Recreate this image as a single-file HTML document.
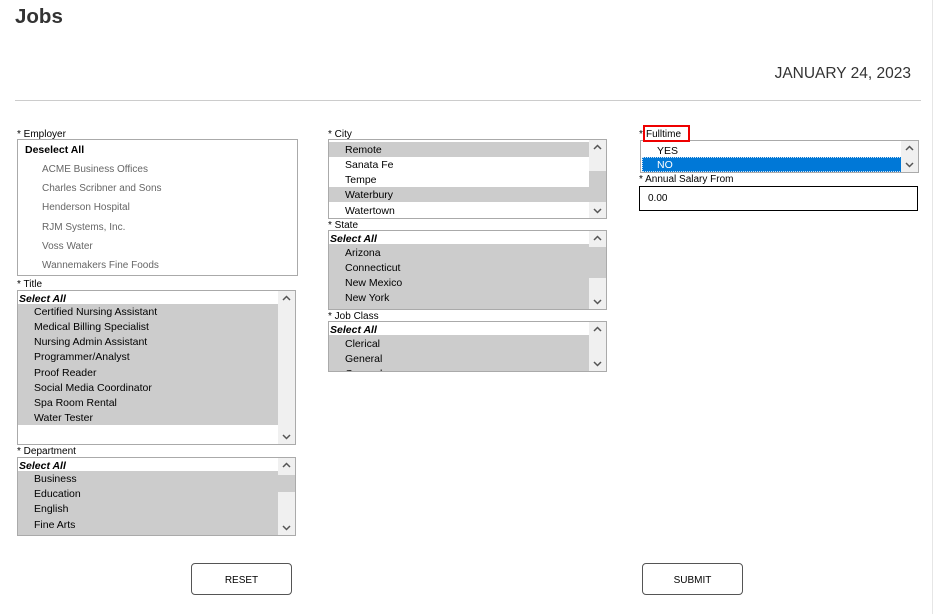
<!DOCTYPE html>
<html><head><style>
*{box-sizing:border-box;margin:0;padding:0}
body{width:936px;height:614px;background:#fff;font-family:"Liberation Sans",Arial,sans-serif;position:relative;overflow:hidden;color:#000}
.a{position:absolute}
.lbl{position:absolute;font-size:10px;color:#000;line-height:12px}
.box{position:absolute;border:1px solid #aaa;background:#fff;overflow:hidden}
.row{position:absolute;left:0;height:15px;font-size:10.5px;line-height:17px;padding-left:16px;color:#000;white-space:nowrap}
.g{background:#ccc}
.sa{font-weight:bold;font-style:italic;padding-left:1px}
.sb{position:absolute;top:0;right:0;width:17px;bottom:0;background:#f0f0f0}
.up,.dn{position:absolute;left:4px;width:9px;height:6px}
.btn{position:absolute;width:101px;height:32px;border:1px solid #555;border-radius:4px;font-size:10px;text-align:center;line-height:33px;background:#fff}
</style></head><body>
<div class="a" style="left:15px;top:5px;font-size:20.5px;font-weight:bold;color:#333">Jobs</div>
<div class="a" style="right:25px;top:65px;font-size:15.5px;color:#333">JANUARY 24, 2023</div>
<div class="a" style="left:15px;top:100px;width:906px;height:1px;background:#ccc"></div>
<div class="a" style="left:932px;top:0;width:1px;height:614px;background:#e6e6e6"></div>

<div class="lbl" style="left:17px;top:129px">* Employer</div>
<div class="box" style="left:17px;top:139px;width:281px;height:137px">
 <div class="a" style="left:7px;top:4px;font-size:10.5px;font-weight:bold">Deselect All</div>
 <div class="a" style="left:24px;top:20px;font-size:10px;color:#666;line-height:19.2px">ACME Business Offices<br>Charles Scribner and Sons<br>Henderson Hospital<br>RJM Systems, Inc.<br>Voss Water<br>Wannemakers Fine Foods</div>
</div>

<div class="lbl" style="left:17px;top:279px">* Title</div>
<div class="box" style="left:17px;top:290px;width:279px;height:155px">
 <div class="row sa" style="top:0">Select All</div>
 <div class="g a" style="left:0;top:13px;width:260px;height:121px"></div>
 <div class="row" style="top:13px">Certified Nursing Assistant</div>
 <div class="row" style="top:28px">Medical Billing Specialist</div>
 <div class="row" style="top:43px">Nursing Admin Assistant</div>
 <div class="row" style="top:58px">Programmer/Analyst</div>
 <div class="row" style="top:74px">Proof Reader</div>
 <div class="row" style="top:89px">Social Media Coordinator</div>
 <div class="row" style="top:104px">Spa Room Rental</div>
 <div class="row" style="top:119px">Water Tester</div>
 <div class="sb"><svg class="up" style="top:4px" viewBox="0 0 9 6"><path d="M1 5L4.5 1.5L8 5" fill="none" stroke="#555" stroke-width="1.5"/></svg><svg class="dn" style="bottom:4px" viewBox="0 0 9 6"><path d="M1 1L4.5 4.5L8 1" fill="none" stroke="#555" stroke-width="1.5"/></svg></div>
</div>

<div class="lbl" style="left:17px;top:446px">* Department</div>
<div class="box" style="left:17px;top:457px;width:279px;height:79px">
 <div class="row sa" style="top:0">Select All</div>
 <div class="g a" style="left:0;top:13px;width:260px;height:66px"></div>
 <div class="row" style="top:13px">Business</div>
 <div class="row" style="top:28px">Education</div>
 <div class="row" style="top:43px">English</div>
 <div class="row" style="top:59px">Fine Arts</div>
 <div class="sb"><div class="a" style="left:0;top:17px;width:17px;height:17px;background:#ccc"></div><svg class="up" style="top:4px" viewBox="0 0 9 6"><path d="M1 5L4.5 1.5L8 5" fill="none" stroke="#555" stroke-width="1.5"/></svg><svg class="dn" style="bottom:4px" viewBox="0 0 9 6"><path d="M1 1L4.5 4.5L8 1" fill="none" stroke="#555" stroke-width="1.5"/></svg></div>
</div>

<div class="lbl" style="left:328px;top:129px">* City</div>
<div class="box" style="left:328px;top:139px;width:279px;height:80px">
 <div class="row g" style="top:2px;width:260px">Remote</div>
 <div class="row" style="top:17px">Sanata Fe</div>
 <div class="row" style="top:32px">Tempe</div>
 <div class="row g" style="top:47px;width:260px">Waterbury</div>
 <div class="row" style="top:63px">Watertown</div>
 <div class="sb"><div class="a" style="left:0;top:31px;width:17px;height:31px;background:#ccc"></div><svg class="up" style="top:4px" viewBox="0 0 9 6"><path d="M1 5L4.5 1.5L8 5" fill="none" stroke="#555" stroke-width="1.5"/></svg><svg class="dn" style="bottom:4px" viewBox="0 0 9 6"><path d="M1 1L4.5 4.5L8 1" fill="none" stroke="#555" stroke-width="1.5"/></svg></div>
</div>

<div class="lbl" style="left:328px;top:220px">* State</div>
<div class="box" style="left:328px;top:230px;width:279px;height:80px">
 <div class="row sa" style="top:0">Select All</div>
 <div class="g a" style="left:0;top:13px;width:260px;height:67px"></div>
 <div class="row" style="top:14px">Arizona</div>
 <div class="row" style="top:29px">Connecticut</div>
 <div class="row" style="top:44px">New Mexico</div>
 <div class="row" style="top:59px">New York</div>
 <div class="sb"><div class="a" style="left:0;top:16px;width:17px;height:31px;background:#ccc"></div><svg class="up" style="top:4px" viewBox="0 0 9 6"><path d="M1 5L4.5 1.5L8 5" fill="none" stroke="#555" stroke-width="1.5"/></svg><svg class="dn" style="bottom:4px" viewBox="0 0 9 6"><path d="M1 1L4.5 4.5L8 1" fill="none" stroke="#555" stroke-width="1.5"/></svg></div>
</div>

<div class="lbl" style="left:328px;top:311px">* Job Class</div>
<div class="box" style="left:328px;top:321px;width:279px;height:51px">
 <div class="row sa" style="top:0">Select All</div>
 <div class="g a" style="left:0;top:13px;width:260px;height:38px"></div>
 <div class="row" style="top:14px">Clerical</div>
 <div class="row" style="top:29px">General</div>
 <div class="row" style="top:44px">General</div>
 <div class="sb"><svg class="up" style="top:4px" viewBox="0 0 9 6"><path d="M1 5L4.5 1.5L8 5" fill="none" stroke="#555" stroke-width="1.5"/></svg><svg class="dn" style="bottom:4px" viewBox="0 0 9 6"><path d="M1 1L4.5 4.5L8 1" fill="none" stroke="#555" stroke-width="1.5"/></svg></div>
</div>

<div class="box" style="left:640px;top:140px;width:279px;height:33px">
 <div class="row" style="top:2px">YES</div>
 <div class="row" style="top:16px;left:1px;width:260px;background:#0078d7;color:#fff;border:1px dotted #cfe4f7;padding-left:14px;line-height:14px">NO</div>
 <div class="sb"><svg class="up" style="top:4px" viewBox="0 0 9 6"><path d="M1 5L4.5 1.5L8 5" fill="none" stroke="#555" stroke-width="1.5"/></svg><svg class="dn" style="bottom:4px" viewBox="0 0 9 6"><path d="M1 1L4.5 4.5L8 1" fill="none" stroke="#555" stroke-width="1.5"/></svg></div>
</div>
<div class="lbl" style="left:639px;top:129px">*</div>
<div class="a" style="left:643px;top:125px;width:47px;height:17px;border:2px solid #e00;z-index:5;background:#fff"></div>
<div class="lbl" style="left:646px;top:129px;z-index:6">Fulltime</div>
<div class="lbl" style="left:639px;top:174px">* Annual Salary From</div>
<div class="a" style="left:639px;top:186px;width:279px;height:25px;border:1px solid #000;font-size:10px;line-height:24px;padding-left:8px">0.00</div>

<div class="btn" style="left:191px;top:563px">RESET</div>
<div class="btn" style="left:642px;top:563px">SUBMIT</div>
</body></html>
